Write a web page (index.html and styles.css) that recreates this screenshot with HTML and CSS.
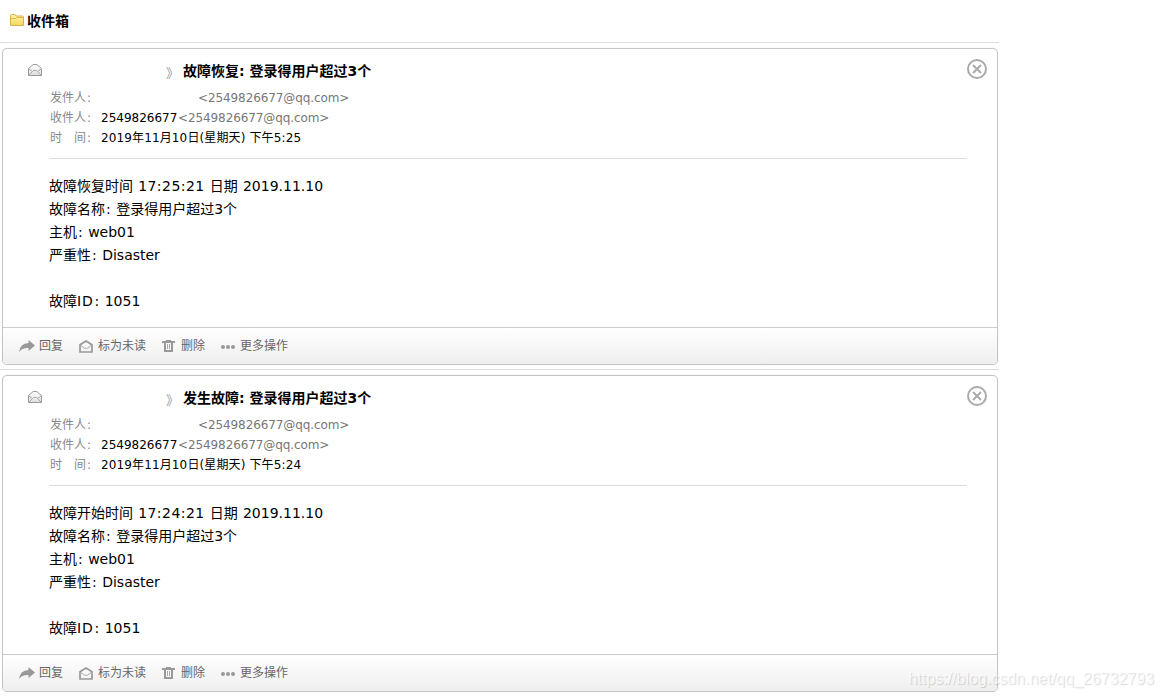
FILE: index.html
```
<!DOCTYPE html>
<html lang="zh-CN">
<head>
    <meta charset="UTF-8">
    <title>收件箱</title>
    <link rel="stylesheet" href="styles.css">
</head>
<body>
    <svg class="sprite" width="0" height="0">
        <defs>
            <linearGradient id="folderFill" x1="0" y1="0" x2="0" y2="1">
                <stop offset="0" stop-color="#fff3b0"/>
                <stop offset="1" stop-color="#f5d65c"/>
            </linearGradient>
            <linearGradient id="mailFill" x1="0" y1="0" x2="0" y2="1">
                <stop offset="0" stop-color="#fff"/>
                <stop offset="1" stop-color="#ddd"/>
            </linearGradient>
        </defs>
        <symbol id="icon-mail" viewBox="0 0 14 12">
            <path d="M.5 4.500L4 1.500Q5 .5 6 .5h2q1 0 2 1l3.500 3v7H.5z" fill="url(#mailFill)" stroke="#999"/>
            <path d="M1 5l3.500 2.500L1 11M13 5L9.500 7.500 13 11M4.500 7.500l1-1h3l1 1" fill="none" stroke="#aaa"/>
        </symbol>
        <symbol id="icon-close" viewBox="0 0 20 20">
            <circle cx="10" cy="10" r="9" fill="none" stroke="#aaa" stroke-width="2"/>
            <path d="M6 6l8 8M14 6l-8 8" stroke="#aaa" stroke-width="2"/>
        </symbol>
        <symbol id="icon-reply" viewBox="0 0 16 12">
            <path d="M9.500 0L16 5.500 9.500 11V8Q3.500 7.500 0 12 1 3.500 9.500 3z" fill="#999"/>
        </symbol>
        <symbol id="icon-unread" viewBox="0 0 14 13">
            <path d="M1 4.800L7 1l6 3.800V12H1z" fill="none" stroke="#999" stroke-width="1.700"/>
            <path d="M2 5.500l3.500 2.700h3L12 5.500" fill="none" stroke="#aaa"/>
        </symbol>
        <symbol id="icon-trash" viewBox="0 0 13 12">
            <path d="M0 1h13v2H0zM4 0h5v1H4z" fill="#999"/>
            <path d="M3 2v9h7V2" fill="none" stroke="#999" stroke-width="2"/>
            <path d="M5.500 4v5M7.500 4v5" stroke="#aaa"/>
        </symbol>
        <symbol id="icon-more" viewBox="0 0 14 4">
            <circle cx="2" cy="2" r="2" fill="#999"/>
            <circle cx="7" cy="2" r="2" fill="#999"/>
            <circle cx="12" cy="2" r="2" fill="#999"/>
        </symbol>
    </svg>

    <div class="mailbox">
        <div class="folder">
            <svg class="folder-icon" width="14" height="12" viewBox="0 0 14 12">
                <path d="M.5 11.500v-10q0-1 1-1h3q1 0 1.500 1.500h6.500q1 0 1 1v8.500z" fill="url(#folderFill)" stroke="#d8b04c"/>
                <path d="M1 4.500h5l1-1h6" fill="none" stroke="#e2b94c"/>
            </svg>
            <h1>收件箱</h1>
        </div>

        <div class="mail-item">
            <div class="mail">
                <div class="mail-head">
                    <svg class="mail-icon"><use href="#icon-mail"/></svg>
                    <span class="arrow">》</span>
                    <h2>故障恢复: 登录得用户超过3个</h2>
                    <svg class="close"><use href="#icon-close"/></svg>
                </div>
                <div class="meta">
                    <div class="row"><span class="label">发件人<b>:</b></span><span class="addr sender">&lt;2549826677@qq.com&gt;</span></div>
                    <div class="row"><span class="label">收件人<b>:</b></span><span class="name">2549826677</span><span class="addr">&lt;2549826677@qq.com&gt;</span></div>
                    <div class="row"><span class="label">时<i></i>间<b>:</b></span><span class="date">2019年11月10日(星期天) 下午5:25</span></div>
                </div>
                <div class="content">
                    <p class="time">故障恢复时间 <span>17:25:21</span> 日期 2019.11.10</p>
                    <p>故障名称<b>:</b> 登录得用户超过3个</p>
                    <p>主机<b>:</b> web01</p>
                    <p>严重性<b>:</b> Disaster</p>
                    <p>&nbsp;</p>
                    <p>故障<span class="id">ID</span><b>:</b> 1051</p>
                </div>
                <div class="toolbar">
                    <a class="reply"><svg><use href="#icon-reply"/></svg>回复</a>
                    <a class="unread"><svg><use href="#icon-unread"/></svg>标为未读</a>
                    <a class="trash"><svg><use href="#icon-trash"/></svg>删除</a>
                    <a class="more"><svg><use href="#icon-more"/></svg>更多操作</a>
                </div>
            </div>
        </div>

        <div class="mail-item">
            <div class="mail">
                <div class="mail-head">
                    <svg class="mail-icon"><use href="#icon-mail"/></svg>
                    <span class="arrow">》</span>
                    <h2>发生故障: 登录得用户超过3个</h2>
                    <svg class="close"><use href="#icon-close"/></svg>
                </div>
                <div class="meta">
                    <div class="row"><span class="label">发件人<b>:</b></span><span class="addr sender">&lt;2549826677@qq.com&gt;</span></div>
                    <div class="row"><span class="label">收件人<b>:</b></span><span class="name">2549826677</span><span class="addr">&lt;2549826677@qq.com&gt;</span></div>
                    <div class="row"><span class="label">时<i></i>间<b>:</b></span><span class="date">2019年11月10日(星期天) 下午5:24</span></div>
                </div>
                <div class="content">
                    <p class="time">故障开始时间 <span>17:24:21</span> 日期 2019.11.10</p>
                    <p>故障名称<b>:</b> 登录得用户超过3个</p>
                    <p>主机<b>:</b> web01</p>
                    <p>严重性<b>:</b> Disaster</p>
                    <p>&nbsp;</p>
                    <p>故障<span class="id">ID</span><b>:</b> 1051</p>
                </div>
                <div class="toolbar">
                    <a class="reply"><svg><use href="#icon-reply"/></svg>回复</a>
                    <a class="unread"><svg><use href="#icon-unread"/></svg>标为未读</a>
                    <a class="trash"><svg><use href="#icon-trash"/></svg>删除</a>
                    <a class="more"><svg><use href="#icon-more"/></svg>更多操作</a>
                </div>
            </div>
        </div>
    </div>

    <div class="watermark">https://blog.csdn.net/qq_26732793</div>
</body>
</html>
```
FILE: styles.css
```
* {
    margin: 0;
    padding: 0;
    box-sizing: border-box;
}

body {
    height: 697px;
    overflow: hidden;
    background: #fff;
    color: #000;
    font-family: Verdana, "DejaVu Sans", "Noto Sans CJK SC", sans-serif;
    font-size: 14px;
}

svg {
    display: block;
    flex: none;
}

.sprite {
    position: absolute;
}

.mailbox {
    width: 999px;
}

.folder {
    display: flex;
    align-items: center;
    height: 42px;
    padding-left: 10px;
}

.folder-icon {
    margin: 0 3px 2px 0;
}

h1,
h2 {
    font-size: 14px;
    line-height: 20px;
    font-weight: bold;
}

.mail-item {
    height: 327px;
    padding: 5px 1px 0 2px;
    border-top: 1px solid #ddd;
}

.mail {
    height: 317px;
    border: 1px solid #c5c5c5;
    border-radius: 5px;
    box-shadow: 0 0 1px #ccc;
    overflow: hidden;
}

.mail-head {
    display: flex;
    align-items: center;
    height: 39px;
    padding: 5px 10px 0 25px;
}

.mail-icon {
    width: 14px;
    height: 12px;
    margin-bottom: 2px;
}

.arrow {
    width: 14px;
    margin: 2px 0 0 124px;
    color: #999;
    font-size: 13px;
}

h2 {
    margin-left: 3px;
}

.close {
    width: 20px;
    height: 20px;
    margin: 0 0 4px auto;
}

.meta {
    height: 71px;
    margin: 0 30px 0 46px;
    padding-left: 1px;
    border-bottom: 1px solid #ddd;
    font-size: 12px;
    line-height: 20px;
}

.row {
    display: flex;
    height: 20px;
    white-space: nowrap;
}

.label {
    width: 51px;
    color: #888;
}

.label i {
    display: inline-block;
    width: 12px;
}

.label b {
    margin-left: 1px;
    font-weight: normal;
}

.name {
    width: 77px;
}

.addr {
    color: #777;
    letter-spacing: -0.1px;
}

.sender {
    margin-left: 97px;
}

.date {
    letter-spacing: 0.13px;
}

.content {
    height: 168px;
    padding: 16px 0 0 46px;
    line-height: 23px;
}

.content p {
    height: 23px;
}

.content b {
    margin: 0 1px;
    font-weight: normal;
}

.time {
    word-spacing: 0.7px;
}

.time span {
    letter-spacing: 0.45px;
}

.id {
    letter-spacing: 0.8px;
}

.toolbar {
    display: flex;
    align-items: center;
    height: 38px;
    padding: 0 0 4px 16px;
    border-top: 1px solid #ccc;
    background: linear-gradient(#fff, #eee);
    color: #666;
    font-size: 12px;
}

.toolbar a {
    display: flex;
    align-items: center;
    margin-right: 16px;
}

.toolbar svg {
    width: 16px;
    height: 12px;
    margin: 3px 4px 0 0;
}

.toolbar .unread svg {
    width: 14px;
    height: 13px;
    margin-right: 5px;
}

.toolbar .trash svg {
    width: 13px;
    height: 12px;
    margin-right: 6px;
}

.toolbar .more svg {
    width: 14px;
    height: 4px;
    margin: 4px 5px 0 0;
}

/* sits over the bottom right corner of the last mail */
.watermark {
    position: absolute;
    right: 9px;
    bottom: 9px;
    color: rgba(255, 255, 255, 0.7);
    font: 16px/18px "Liberation Sans", Arial, sans-serif;
    text-shadow: 1px 1px 1px rgba(0, 0, 0, 0.15);
}
```
